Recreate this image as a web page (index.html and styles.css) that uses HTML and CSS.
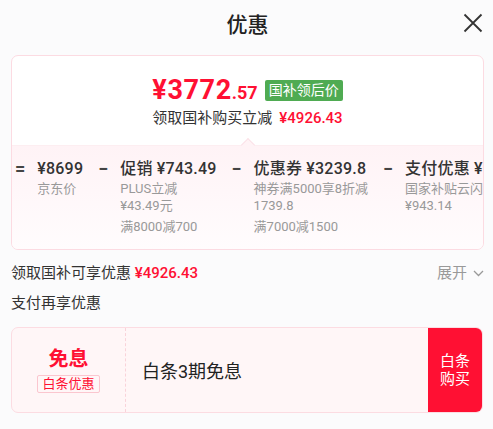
FILE: index.html
```html
<!DOCTYPE html>
<html>

<head>
  <meta charset="utf-8">
  <title>优惠</title>
  <link rel="stylesheet" href="styles.css">
</head>

<body>
  <div class="sheet">
    <div class="header">
      <span></span>
      <h1 class="title">优惠</h1>
      <button class="close" aria-label="关闭">
        <svg width="20" height="20" viewBox="0 0 20 20">
          <path d="M1.5 1.5 L18.5 18.5 M18.5 1.5 L1.5 18.5" stroke="#333" stroke-width="1.8" fill="none" />
        </svg>
      </button>
    </div>

    <!-- price summary card -->
    <div class="card">
      <div class="summary">
        <div class="price-row">
          <span class="price"><span class="price-int">¥3772</span><span class="price-dec">.57</span></span>
          <span class="badge">国补领后价</span>
        </div>
        <div class="save-row">
          <span>领取国补购买立减</span>
          <span class="red">¥4926.43</span>
        </div>
      </div>

      <div class="breakdown">
        <span class="op">=</span>
        <div class="item">
          <div class="item-title">¥8699</div>
          <div class="item-sub">京东价</div>
        </div>
        <span class="op">−</span>
        <div class="item">
          <div class="item-title">促销 ¥743.49</div>
          <div class="item-sub">PLUS立减<br>¥43.49元</div>
          <div class="item-sub extra">满8000减700</div>
        </div>
        <span class="op">−</span>
        <div class="item">
          <div class="item-title">优惠券 ¥3239.8</div>
          <div class="item-sub">神券满5000享8折减<br>1739.8</div>
          <div class="item-sub extra">满7000减1500</div>
        </div>
        <span class="op">−</span>
        <div class="item">
          <div class="item-title">支付优惠 ¥943.14</div>
          <div class="item-sub">国家补贴云闪付<br>¥943.14</div>
        </div>
      </div>
    </div>

    <div class="row">
      <div>领取国补可享优惠 <span class="red">¥4926.43</span></div>
      <div class="expand">展开
        <svg width="11" height="7" viewBox="0 0 11 7">
          <path d="M1 1 L5.5 5.5 L10 1" stroke="#999" stroke-width="1.3" fill="none" />
        </svg>
      </div>
    </div>
    <div class="row">支付再享优惠</div>

    <!-- payment offer -->
    <div class="offer">
      <div class="offer-left">
        <div class="offer-name">免息</div>
        <div class="offer-tag">白条优惠</div>
      </div>
      <div class="offer-text">白条3期免息</div>
      <div class="offer-btn">白条<br>购买</div>
    </div>
  </div>
</body>

</html>
```

FILE: styles.css
```css
body,
html {
  margin: 0;
  padding: 0;
}

body {
  background: #fbfbfc;
  font-family: Roboto, "Noto Sans CJK SC", sans-serif;
  color: #333;
}

.sheet {
  width: 493px;
  height: 429px;
  box-sizing: border-box;
  padding: 0 9px 0 11px;
  overflow: hidden;
}

.header {
  display: grid;
  grid-template-columns: 1fr auto 1fr;
  align-items: center;
  height: 46px;
}

.title {
  margin: 0;
  font-size: 21px;
  font-weight: 500;
  color: #222;
}

.close {
  justify-self: end;
  margin-right: 1px;
  padding: 0;
  border: none;
  background: none;
  display: flex;
}

.card {
  margin-top: 9px;
  border: 1px solid #fcdbe2;
  border-radius: 7px;
  background: #fff;
  overflow: hidden;
}

.summary {
  padding: 17px 0 16px;
  text-align: center;
}

.price-row {
  display: flex;
  justify-content: center;
  align-items: center;
  gap: 7px;
  height: 34px;
}

.price {
  color: #ff1033;
  font-weight: 700;
}

.price-int {
  font-size: 27px;
  letter-spacing: 0.6px;
}

.price-dec {
  font-size: 18px;
}

.badge {
  background: #4fab52;
  color: #fff;
  font-size: 14px;
  line-height: 21px;
  padding: 0 4px;
  border-radius: 2px;
}

.save-row {
  display: flex;
  justify-content: center;
  gap: 7px;
  font-size: 15px;
  line-height: 22px;
}

.red {
  color: #ff1033;
  font-weight: 500;
}

.breakdown {
  position: relative;
  display: flex;
  align-items: flex-start;
  padding: 12px 0 14px 3px;
  border-top: 1px solid #fdeef1;
  background: linear-gradient(#fff3f6, #fffcfd);
  white-space: nowrap;
}

.breakdown::before {
  content: "";
  position: absolute;
  left: 231px;
  top: -6px;
  width: 9px;
  height: 9px;
  background: #fff3f6;
  border-top: 1px solid #fbe2e8;
  border-left: 1px solid #fbe2e8;
  transform: rotate(45deg);
}

.op {
  font-size: 18px;
  font-weight: 700;
  line-height: 22px;
  margin-right: 12px;
  color: #444;
}

.item {
  margin-right: 15px;
}

.item-title {
  font-size: 16px;
  font-weight: 500;
  letter-spacing: 0.2px;
  line-height: 22px;
  color: #333;
}

.item-sub {
  font-size: 13px;
  line-height: 17px;
  color: #999;
}

.item-sub.extra {
  margin-top: 4px;
}

.row {
  display: flex;
  justify-content: space-between;
  align-items: center;
  font-size: 15px;
  line-height: 24px;
  margin-top: 6px;
  color: #333;
}

.card + .row {
  margin-top: 11px;
}

.expand {
  display: flex;
  align-items: center;
  gap: 6px;
  color: #999;
}

.offer {
  display: flex;
  height: 86px;
  box-sizing: border-box;
  margin-top: 12px;
  margin-right: 1px;
  border: 1px solid #fcdce2;
  border-radius: 7px;
  background: #fff6f7;
  overflow: hidden;
}

.offer-left {
  width: 113px;
  border-right: 1px dashed #f9d3da;
  display: flex;
  flex-direction: column;
  align-items: center;
  justify-content: center;
}

.offer-name {
  color: #ff1033;
  font-size: 20px;
  font-weight: 700;
  line-height: 24px;
}

.offer-tag {
  margin-top: 4px;
  color: #ff1033;
  font-size: 13px;
  line-height: 16px;
  padding: 0 4px;
  border: 1px solid #fbc6cf;
  border-radius: 2px;
}

.offer-text {
  flex: 1;
  display: flex;
  align-items: center;
  padding-left: 16px;
  font-size: 18px;
  color: #222;
}

.offer-btn {
  width: 54px;
  display: flex;
  align-items: center;
  justify-content: center;
  text-align: center;
  background: #ff1033;
  color: #fff;
  font-size: 15px;
  line-height: 18px;
}
```
